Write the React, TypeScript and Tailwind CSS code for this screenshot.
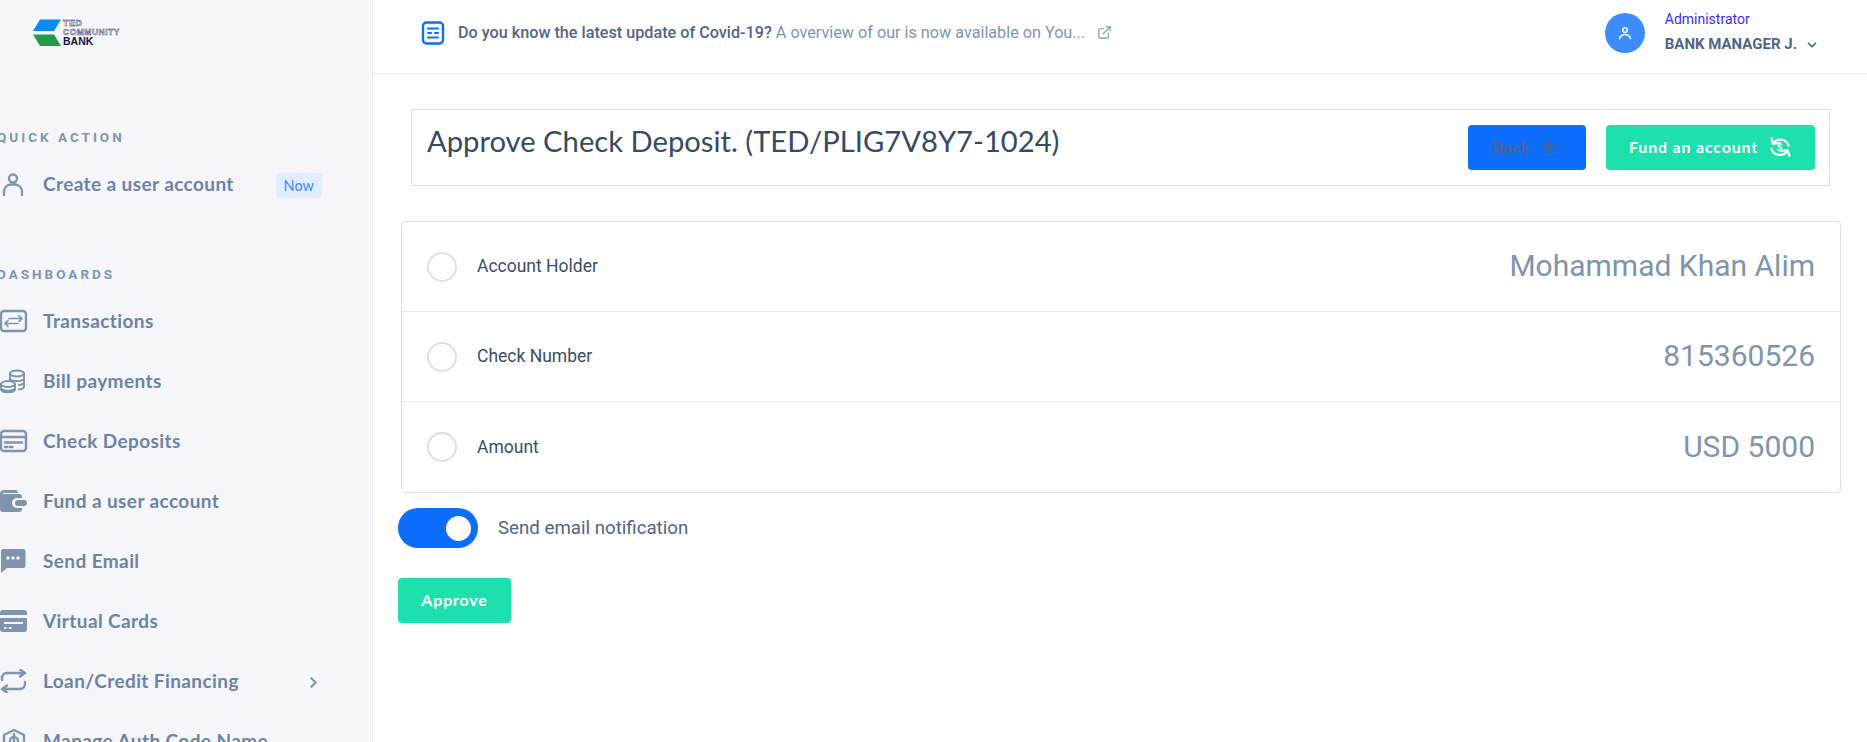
import { ChevronDown, ChevronRight, ArrowLeft, ExternalLink } from 'lucide-react';
import type { ReactNode } from 'react';

const nunito = "font-['Lato','Noto_Sans',sans-serif]";

function Logo() {
  return (
    <div className="flex items-center h-7 ml-[33px]">
      <svg width="29" height="28" viewBox="0 0 29 28" className="shrink-0">
        <polygon points="7,0.500 28,0.500 21,12 0,12" fill="#0a8cf5" />
        <polygon points="0,15.500 21,15.500 28,27 7,27" fill="#259b46" />
      </svg>
      <div className="ml-[1px] font-['Liberation_Sans',sans-serif] font-bold text-[8.500px] leading-[8.500px] text-[#14143c]">
        <div className="text-[9px] tracking-[0.4px] text-transparent [-webkit-text-stroke:0.4px_#14143c]">TED</div>
        <div className="tracking-[0.500px] text-transparent [-webkit-text-stroke:0.4px_#14143c]">COMMUNITY</div>
        <div className="text-[10.500px] leading-[11px]">BANK</div>
      </div>
    </div>
  );
}

function Icon({ children }: { children: ReactNode }) {
  return (
    <svg width="28" height="24" viewBox="0 0 28 24" fill="none" stroke="#8094ae" strokeWidth="2.400" strokeLinecap="round" strokeLinejoin="round" className="shrink-0">
      {children}
    </svg>
  );
}

function NavItem({ icon, label, right }: { icon: ReactNode; label: string; right?: ReactNode }) {
  return (
    <div className="flex items-center h-[60px]">
      <div className="w-[43px] flex">{icon}</div>
      <span className={`${nunito} text-[19px] tracking-[0.4px] font-bold text-[#6e82a5] whitespace-nowrap`}>{label}</span>
      {right}
    </div>
  );
}

function Heading({ children }: { children: string }) {
  return <div className="font-['Roboto',sans-serif] text-[13.500px] font-bold tracking-[3px] text-[#8094ae] uppercase leading-4">{children}</div>;
}

function Row({ label, value, last }: { label: string; value: string; last?: boolean }) {
  return (
    <div className={`flex items-center justify-between h-[90px] pl-[25px] pr-[25px] ${last ? '' : 'border-b border-[#e5e9f2]'}`}>
      <div className="flex items-center">
        <div className="w-[30px] h-[30px] rounded-full border-2 border-[#dbdfea] bg-white" />
        <span className="ml-[20px] text-[17.500px] text-[#3c4d62] font-['Roboto',sans-serif]">{label}</span>
      </div>
      <span className="text-[30px] text-[#8094ae] font-['Roboto',sans-serif] -mt-[2px]">{value}</span>
    </div>
  );
}

export default function App() {
  return (
    <div className="flex h-[742px] w-[1867px] overflow-hidden bg-white font-['Roboto',sans-serif]">
      <aside className="w-[373px] shrink-0 bg-[#f5f6fa] border-r border-[#e5e9f2] overflow-hidden">
        <div className="pt-[19px]">
          <Logo />
        </div>
        <div className="pl-0 pr-[50px] -ml-[3px]">
          <div className="mt-[82px]">
            <Heading>Quick Action</Heading>
          </div>
          <div className="ml-[3px] mt-[9px]">
            <NavItem
              label="Create a user account"
              icon={
                <Icon>
                  <circle cx="13" cy="6.500" r="4" />
                  <path d="M4 23v-4.500a7.500 7.500 0 0 1 7.500-6h3a7.500 7.500 0 0 1 7.500 6V23" />
                </Icon>
              }
              right={<span className={`${nunito} ml-auto mt-[2px] rounded-[4px] bg-[#e0edff] text-[#4a8dff] text-[14.500px] font-medium px-[8px] leading-[25px]`}>Now</span>}
            />
          </div>
          <div className="mt-[52px]">
            <Heading>Dashboards</Heading>
          </div>
          <div className="ml-[3px] mt-[9px]">
            <NavItem
              label="Transactions"
              icon={
                <Icon>
                  <rect x="1" y="2" width="25" height="20" rx="3" />
                  <path d="M5 14.500h13M8 11.500l-3 3 3 3M22 9.500H9M19 6.500l3 3-3 3" strokeWidth="1.700" />
                </Icon>
              }
            />
            <NavItem
              label="Bill payments"
              icon={
                <Icon>
                  <ellipse cx="17" cy="4.500" rx="7" ry="3" strokeWidth="1.900" />
                  <path d="M10 4.500v9M24 4.500v13c0 1.600-2 2.700-5 3M10 9c0 1.700 3 3 7 3s7-1.300 7-3M24 13c0 1.500-2 2.700-5 3" strokeWidth="1.900" />
                  <ellipse cx="8" cy="15" rx="7" ry="3" fill="#f5f6fa" strokeWidth="1.900" />
                  <path d="M1 15v5.500C1 22 4 23.500 8 23.500s7-1.500 7-3V15M1 19c0 1.500 3 2.800 7 2.800s7-1.300 7-2.800" strokeWidth="1.900" />
                </Icon>
              }
            />
            <NavItem
              label="Check Deposits"
              icon={
                <Icon>
                  <rect x="1" y="2" width="25" height="20" rx="3" />
                  <path d="M1 8h25M5 13.500h17M5 18h2.500M10 18h2.500" />
                </Icon>
              }
            />
            <NavItem
              label="Fund a user account"
              icon={
                <svg width="28" height="24" viewBox="0 0 28 24" className="shrink-0">
                  <path d="M4 1h11a3 3 0 0 1 3 3H3a1 1 0 0 0 0 1h16a3 3 0 0 1 3 3v1h-5a5 5 0 0 0 0 10h5v1a3 3 0 0 1-3 3H3a3 3 0 0 1-3-3V5a4 4 0 0 1 4-4z" fill="#8094ae" />
                  <rect x="15" y="11" width="12" height="6" rx="3" fill="#8094ae" />
                </svg>
              }
            />
            <NavItem
              label="Send Email"
              icon={
                <svg width="28" height="24" viewBox="0 0 28 24" className="shrink-0">
                  <path d="M3 0h20a2.500 2.500 0 0 1 2.500 2.500v14a2.500 2.500 0 0 1-2.500 2.500H7l-6 5V2.500A2.500 2.500 0 0 1 3 0z" fill="#8094ae" />
                  <circle cx="8" cy="9" r="1.700" fill="#f5f6fa" />
                  <circle cx="13" cy="9" r="1.700" fill="#f5f6fa" />
                  <circle cx="18" cy="9" r="1.700" fill="#f5f6fa" />
                </svg>
              }
            />
            <NavItem
              label="Virtual Cards"
              icon={
                <svg width="28" height="24" viewBox="0 0 28 24" className="shrink-0">
                  <path d="M3 1h21a3 3 0 0 1 3 3v2H0V4a3 3 0 0 1 3-3zM0 9h27v11a3 3 0 0 1-3 3H3a3 3 0 0 1-3-3z" fill="#8094ae" />
                  <path d="M4 14h19M4 19h2.500M9 19h2.500" stroke="#f5f6fa" strokeWidth="2" />
                </svg>
              }
            />
            <NavItem
              label="Loan/Credit Financing"
              icon={
                <Icon>
                  <path d="M25 4H7a5 5 0 0 0-5 5v2M20 0.500l5 3.500-5 3.500M2 20h18a5 5 0 0 0 5-5v-2M7 23.500l-5-3.500 5-3.500" />
                </Icon>
              }
              right={<ChevronRight className="ml-auto mt-[3px] text-[#8094ae]" size={17} strokeWidth={3} />}
            />
            <NavItem
              label="Manage Auth Code Name"
              icon={
                <Icon>
                  <path d="M14 1l10 5v12a3 3 0 0 1-3 3H7a3 3 0 0 1-3-3V6z" />
                  <circle cx="14" cy="12" r="4" />
                  <path d="M14 5v14" />
                </Icon>
              }
            />
          </div>
        </div>
      </aside>

      <main className="flex-1 min-w-0">
        <header className="h-[74px] border-b border-[#e5e9f2] flex items-center pl-[48px] pr-[48px]">
          <svg width="24" height="24" viewBox="0 0 24 24" fill="none" stroke="#0d6efd" strokeLinecap="round" className="-mt-[7px] shrink-0" strokeWidth="2.200">
            <rect x="2" y="1.500" width="20" height="21" rx="3.500" strokeWidth="2.400" />
            <path d="M7 7.500h10M7 12h3M14 12h3M7 16.500h10" />
          </svg>
          <div className="ml-[13px] -mt-[7px] text-[16.200px] whitespace-nowrap flex items-center">
            <span className="font-medium text-[#526484]">Do you know the latest update of Covid-19?</span>
            <span className="ml-1 text-[#8094ae]">A overview of our is now available on You...</span>
            <ExternalLink className="ml-[12px] text-[#8094ae]" size={15} strokeWidth={1.800} />
          </div>
          <div className="ml-auto flex items-center -mt-[8px]">
            <div className="w-10 h-10 rounded-full bg-[#3d8dff] flex items-center justify-center">
              <svg width="14" height="14" viewBox="0 0 14 14" fill="none" stroke="#fff" strokeWidth="1.500" strokeLinecap="round">
                <circle cx="7" cy="4" r="2.300" />
                <path d="M1.500 12.500c1-3 3-4 5.500-4s4.500 1 5.500 4" />
              </svg>
            </div>
            <div className="ml-[20px]">
              <div className="text-[14px] leading-[17px] text-[#3a2cf5] -mt-[2px]">Administrator</div>
              <div className="mt-[7px] flex items-center text-[15px] font-bold text-[#526484] leading-[18px] whitespace-nowrap">
                BANK MANAGER J.
                <ChevronDown className="ml-[8px] mt-[3px]" size={14} strokeWidth={3} />
              </div>
            </div>
          </div>
        </header>

        <div className="pl-[25px] pr-[26px]">
          <div className="mt-[35px] ml-[13px] mr-[11px] h-[77px] border border-[#dbdfea] flex items-start justify-between pl-[15px] pr-[14px]">
            <h1 className={`${nunito} mt-[10px] text-[29.200px] leading-[42px] font-normal text-[#364a63] whitespace-nowrap`}>Approve Check Deposit. (TED/PLIG7V8Y7-1024)</h1>
            <div className="flex gap-[20px] mt-[15px]">
              <button className={`${nunito} h-[45px] w-[118px] pb-[2px] rounded-[4px] bg-[#0d6efd] flex items-center justify-center text-[16px] font-bold tracking-[0.700px] text-[#526484]`}>
                Back
                <ArrowLeft className="ml-[10px]" size={22} strokeWidth={2.200} />
              </button>
              <button className={`${nunito} h-[45px] w-[209px] pb-[2px] rounded-[4px] bg-[#1ee0ac] flex items-center justify-center text-[16px] font-bold tracking-[0.800px] text-white`}>
                Fund an account
                <svg width="24" height="24" viewBox="0 0 24 24" fill="none" stroke="#fff" strokeWidth="2.200" strokeLinecap="round" strokeLinejoin="round" className="ml-[10px]">
                  <path d="M5 9A8.500 8.500 0 0 1 20.500 10.500M3.500 3l1.500 6 5.500-1" />
                  <path d="M19.500 15A8.500 8.500 0 0 1 3.500 13.500M21.500 21l-2-6-5.500 1" />
                  <text x="12" y="15.500" textAnchor="middle" fontSize="10" fontWeight="700" fill="#fff" stroke="none" fontFamily="Roboto, sans-serif">$</text>
                </svg>
              </button>
            </div>
          </div>

          <div className="mt-[35px] ml-[3px] border border-[#dbdfea] rounded-[4px]">
            <Row label="Account Holder" value="Mohammad Khan Alim" />
            <Row label="Check Number" value="815360526" />
            <Row label="Amount" value="USD 5000" last />
          </div>

          <div className="mt-[15px] flex items-center">
            <div className="w-[80px] h-[40px] rounded-full bg-[#0d6efd] flex items-center justify-end pr-[7px]">
              <div className="w-[25px] h-[25px] rounded-full bg-white" />
            </div>
            <span className="ml-[20px] mt-[1px] text-[18.700px] text-[#526484]">Send email notification</span>
          </div>

          <button className={`${nunito} mt-[30px] block w-[113px] h-[45px] rounded-[4px] bg-[#1ee0ac] text-white text-[16px] font-bold tracking-[0.800px] pb-[2px]`}>Approve</button>
        </div>
      </main>
    </div>
  );
}
